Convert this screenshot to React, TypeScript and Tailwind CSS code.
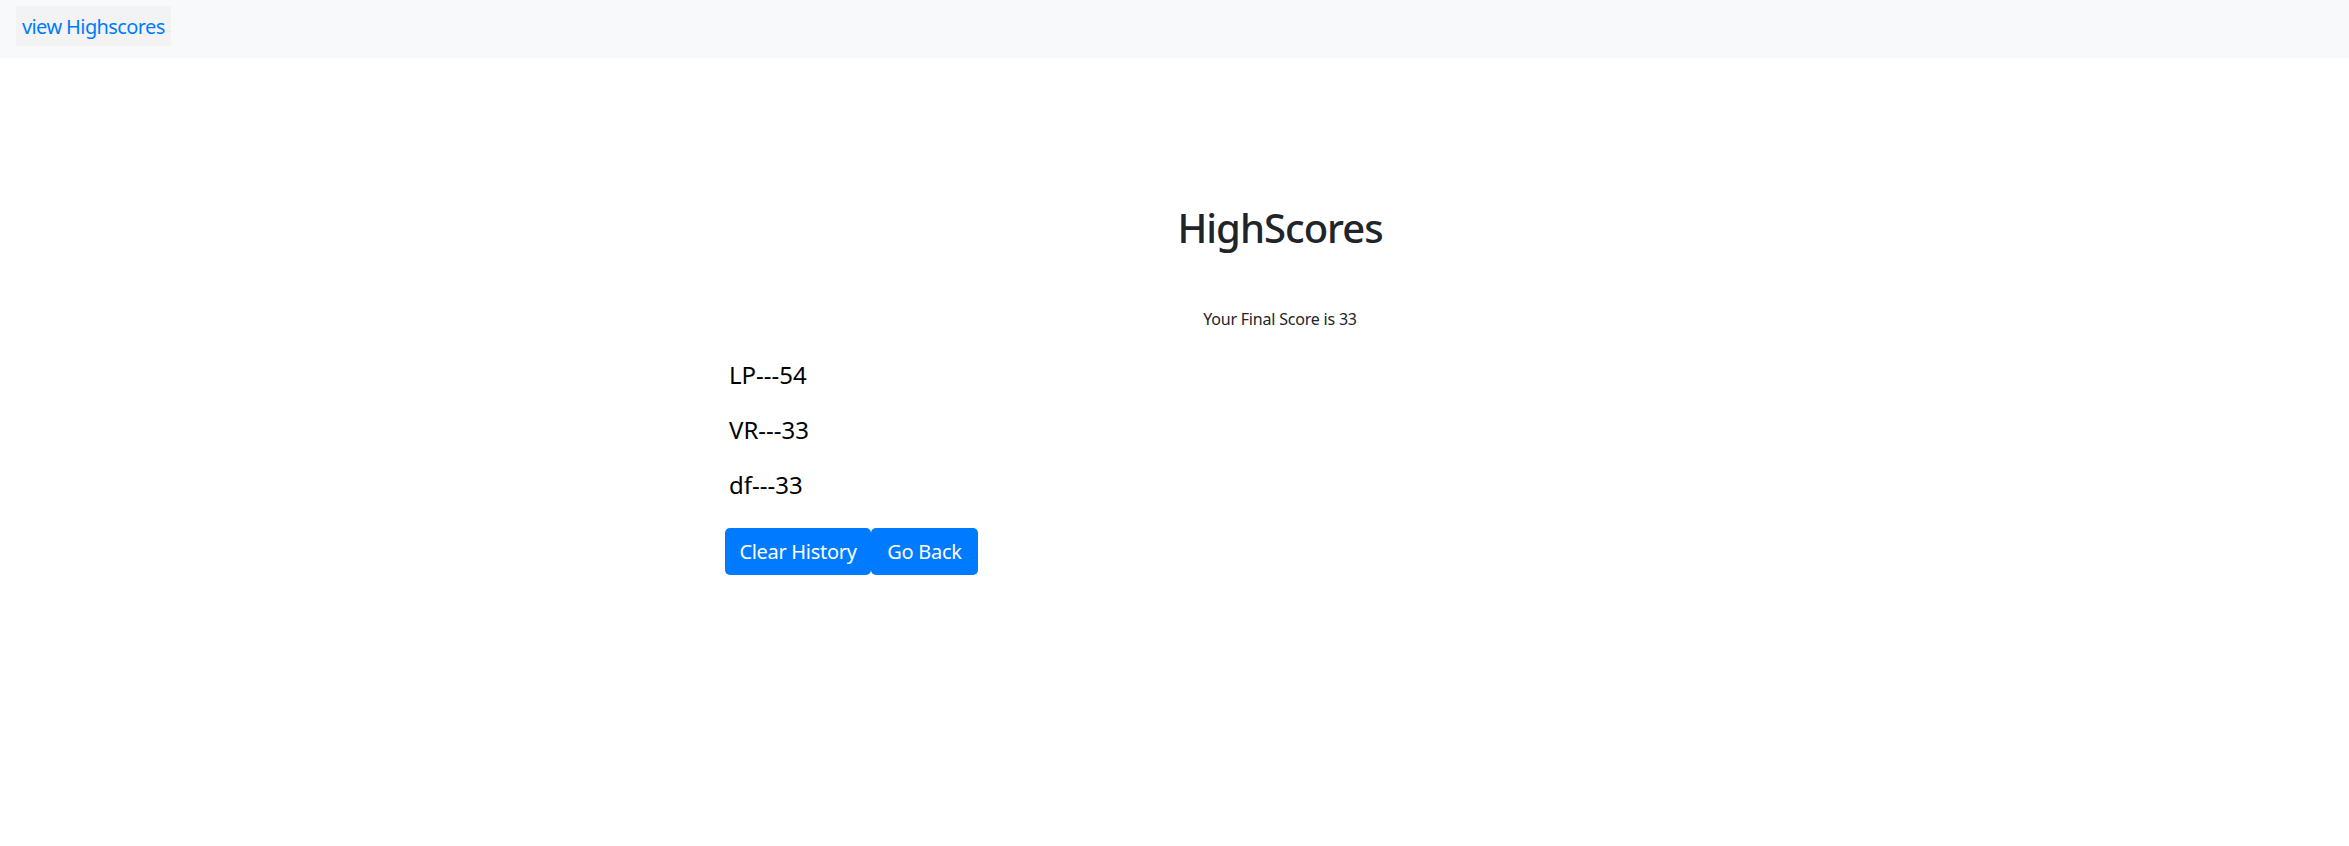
import React from "react";

export default function App() {
  const scores = ["LP---54", "VR---33", "df---33"];
  return (
    <div className="min-h-[846px] w-full bg-white" style={{ fontFamily: '"Noto Sans", "Open Sans", sans-serif' }}>
      <nav className="flex h-[58px] items-start bg-[#f8f9fa] pl-[16px] pt-[6px]">
        <button className="h-[40px] bg-[#f3f3f3] px-[6px] pt-[1px] text-[20px] leading-[30px] tracking-[-0.6px] text-[#007bff]">
          view Highscores
        </button>
      </nav>
      <main className="ml-[725px] w-[1110px]">
        <h1 className="mt-[146px] text-center text-[40px] font-medium leading-[48px] tracking-[-1px] text-[#212529]">
          HighScores
        </h1>
        <p className="mt-[55px] text-center text-[16px] leading-[24px] tracking-[-0.2px] text-[#212529]">
          Your Final Score is 33
        </p>
        <ul className="mt-[26px] flex flex-col gap-[19px] pl-[4px]">
          {scores.map((s) => (
            <li key={s} className="text-[24px] leading-[36px] text-black">
              {s}
            </li>
          ))}
        </ul>
        <div className="mt-[25px] flex">
          <button className="h-[47px] w-[146px] rounded-[5px] bg-[#007bff] pt-[1px] text-[20px] tracking-[-0.3px] text-white">
            Clear History
          </button>
          <button className="h-[47px] w-[107px] rounded-[5px] bg-[#007bff] pt-[1px] text-[20px] tracking-[-0.3px] text-white">
            Go Back
          </button>
        </div>
      </main>
    </div>
  );
}
